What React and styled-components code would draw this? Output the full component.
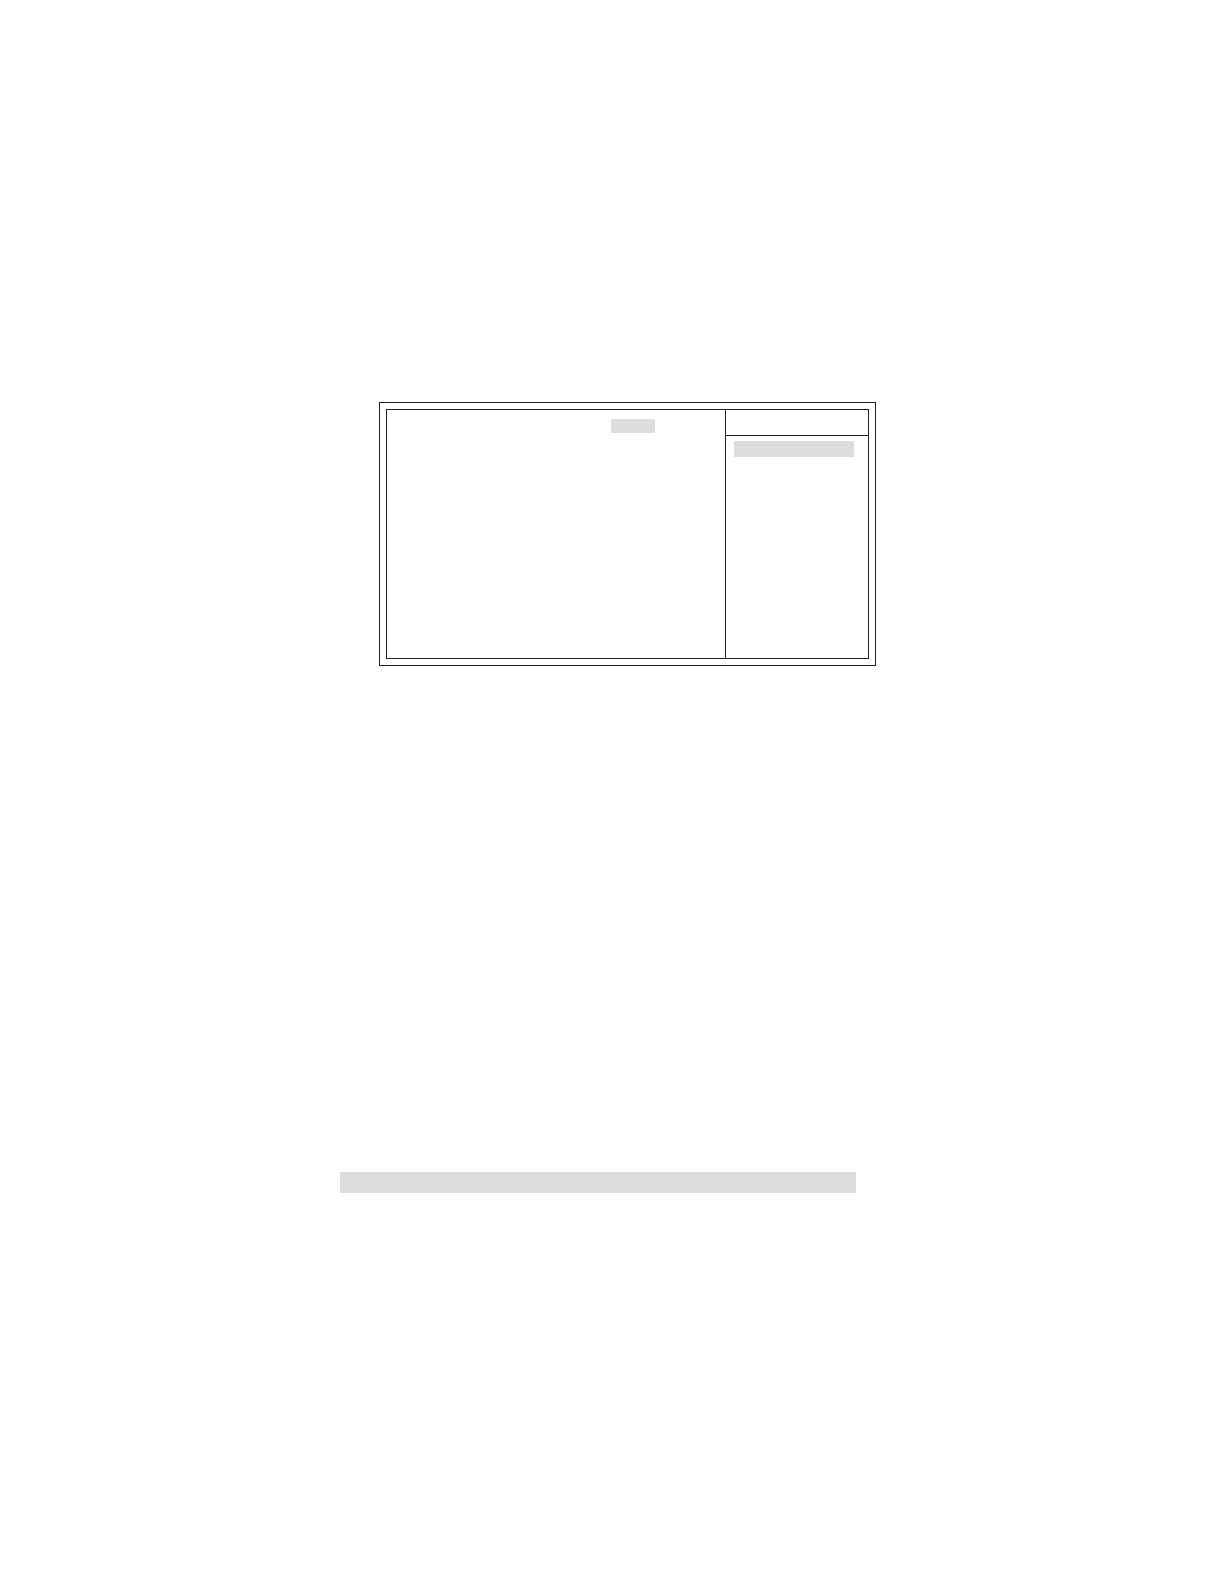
import styled, { createGlobalStyle } from "styled-components";
import React from 'react'

const GlobalStyle = createGlobalStyle`
    body {
        margin: 0;
        background: #fff;
    }
`

const Page = styled.main`
    display: grid;
    grid-template-columns: 340fr 536fr 348fr;
    box-sizing: border-box;
    min-height: 100vh;
    padding: 402px 0 48px;
`

const Content = styled.div`
    grid-column: 2;
    display: flex;
    flex-direction: column;
    gap: 506px;
`

const OuterFrame = styled.section`
    margin-left: 39px;
    padding: 6px;
    border: 1px solid #231f20;
`

const InnerFrame = styled.div`
    display: grid;
    grid-template-columns: 1fr 143px;
    min-height: 248px;
    border: 1px solid #231f20;
`

const MainPane = styled.div`
    display: flex;
    justify-content: flex-end;
    align-items: flex-start;
    padding: 9px 70px 0 0;
`

const SidePane = styled.aside`
    border-left: 1px solid #231f20;
`

const SideHeader = styled.header`
    height: 25px;
    border-bottom: 1px solid #231f20;
`

const SideBody = styled.div`
    padding: 5px 14px 5px 8px;
`

const Highlight = styled.div`
    width: ${props => props.$width || "auto"};
    height: ${props => props.$height};
    background: #dcdddd;
`

const Footer = styled.footer`
    margin-right: 20px;
`


export default function App() {
    return (
        <>
        <GlobalStyle />
        <Page>
            <Content>
                <OuterFrame>
                    <InnerFrame>
                        <MainPane>
                            <Highlight $width="44px" $height="14px" />
                        </MainPane>
                        <SidePane>
                            <SideHeader />
                            <SideBody>
                                <Highlight $height="16px" />
                            </SideBody>
                        </SidePane>
                    </InnerFrame>
                </OuterFrame>
                <Footer>
                    <Highlight $height="21px" />
                </Footer>
            </Content>
        </Page>
        </>
    );
}
